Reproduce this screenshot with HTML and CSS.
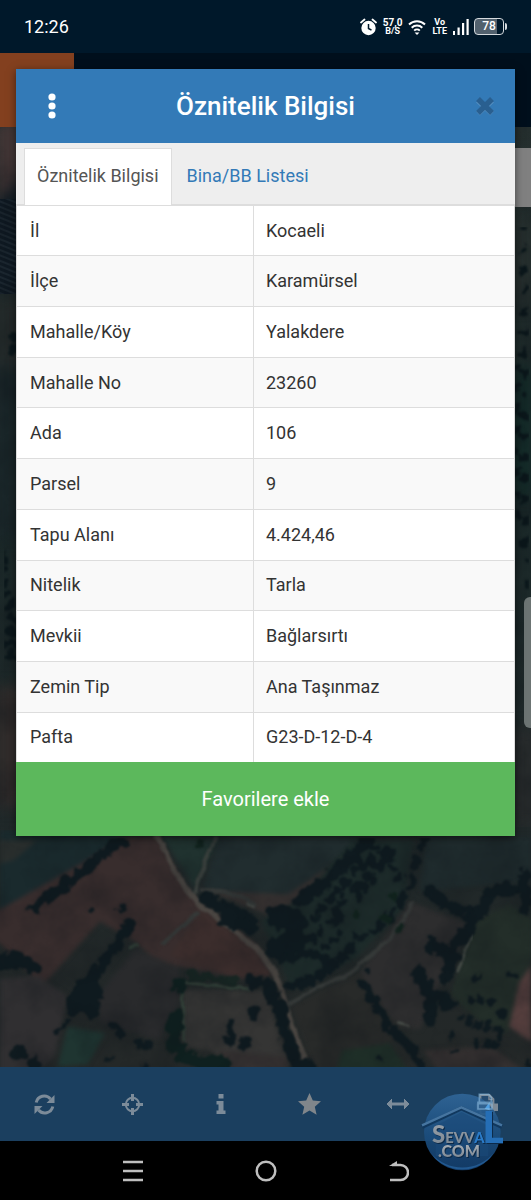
FILE: index.html
```html
<!DOCTYPE html>
<html lang="tr">
  <head>
    <meta charset="utf-8">
    <meta name="viewport" content="width=device-width, initial-scale=1">
    <title>Öznitelik Bilgisi</title>
    <link rel="stylesheet" href="styles.css">
  </head>
  <body>

    <header class="status-bar">
      <div class="clock">12:26</div>
      <div class="status-icons">
        <svg width="17" height="18" viewBox="0 0 17 18">
          <circle cx="8.500" cy="10" r="7.200" fill="#fff"/>
          <path d="M1 4.500l3.500-3M16 4.500l-3.500-3" stroke="#fff" stroke-width="1.800" stroke-linecap="round"/>
          <path d="M8.500 6v4.500l3 1.700" fill="none" stroke="#00182a" stroke-width="1.500"/>
        </svg>
        <div class="status-text"><b>57,0</b><b class="small">B/S</b></div>
        <svg width="18" height="16" viewBox="0 0 18 16" fill="none" stroke="#fff" stroke-width="2">
          <path d="M1 5.500a11.500 11.500 0 0 1 16 0M3.700 8.700a7.600 7.600 0 0 1 10.600 0M6.200 11.600a4 4 0 0 1 5.600 0"/>
          <path d="M9 16l-2.400-2.600h4.800z" fill="#fff" stroke="none"/>
        </svg>
        <div class="status-text"><b class="small">Vo</b><b class="small">LTE</b></div>
        <div class="signal-battery">
          <svg width="16" height="17" viewBox="0 0 16 17" fill="#fff">
            <path d="M0 13h2v4H0zM4.500 9.500h2.200V17H4.500zM9 5h2.200v12H9zM13.500 1h2.200v16h-2.200z"/>
          </svg>
          <div class="battery">78</div>
        </div>
      </div>
    </header>

    <main class="app">
      <div class="navbar"><div class="brand"></div></div>

      <svg class="map" viewBox="0 0 531 940" preserveAspectRatio="xMidYMin slice" aria-hidden="true">
        <defs>
          <linearGradient id="ground" x1="0" y1="0" x2="0" y2="1">
            <stop offset="0" stop-color="#26302f"/>
            <stop offset=".4" stop-color="#1b2929"/>
            <stop offset=".7" stop-color="#1f2829"/>
            <stop offset="1" stop-color="#242828"/>
          </linearGradient>
          <pattern id="furrows" width="8" height="5" patternUnits="userSpaceOnUse" patternTransform="rotate(22)">
            <rect width="8" height="5" fill="#1b262f"/>
            <rect width="8" height="3" fill="#0f1922"/>
          </pattern>
          <filter id="rough" x="0" y="0" width="1" height="1" color-interpolation-filters="sRGB">
            <feTurbulence type="fractalNoise" baseFrequency=".035" numOctaves="2" seed="4" result="n"/>
            <feDisplacementMap in="SourceGraphic" in2="n" scale="40" xChannelSelector="R" yChannelSelector="G"/>
            <feGaussianBlur stdDeviation="3.200"/>
          </filter>
          <filter id="wavy" x="0" y="0" width="1" height="1" color-interpolation-filters="sRGB">
            <feTurbulence type="fractalNoise" baseFrequency=".02" numOctaves="2" seed="2" result="n"/>
            <feDisplacementMap in="SourceGraphic" in2="n" scale="16" xChannelSelector="R" yChannelSelector="G"/>
            <feGaussianBlur stdDeviation="2.500"/>
          </filter>
          <filter id="spots" x="0" y="0" width="1" height="1" color-interpolation-filters="sRGB">
            <feTurbulence type="fractalNoise" baseFrequency=".12" numOctaves="2" seed="6" result="n"/>
            <feDisplacementMap in="SourceGraphic" in2="n" scale="14" xChannelSelector="R" yChannelSelector="G"/>
            <feGaussianBlur stdDeviation=".8"/>
          </filter>
          <filter id="soft" x="0" y="0" width="1" height="1" color-interpolation-filters="sRGB">
            <feGaussianBlur stdDeviation="7"/>
          </filter>
          <filter id="grain" x="0" y="0" width="1" height="1" color-interpolation-filters="sRGB">
            <feTurbulence type="fractalNoise" baseFrequency=".025" numOctaves="5" seed="9"/>
            <feColorMatrix values="0 0 0 0 .05  0 0 0 0 .07  0 0 0 0 .09  1 1 0 0 -.800"/>
          </filter>
        </defs>
        <rect width="531" height="940" fill="url(#ground)"/>

        <!-- strips beside the dialog -->
        <g filter="url(#soft)">
          <path d="M-5-5h30v50L-5 80z" fill="#423535"/>
          <path d="M-5 75L25 50v110H-5z" fill="#111c24"/>
          <path d="M-5 170h30v70H-5z" fill="#242a2a"/>
          <path d="M-5 240h30v170H-5z" fill="#1a2629"/>
          <path d="M-5 560h30v120H-5z" fill="#312c2b"/>
          <path d="M510 90h25v90h-25z" fill="#262f2e"/>
          <path d="M510 240h25v130h-25z" fill="#142a28"/>
          <path d="M510 600h25v100h-25z" fill="#282b2c"/>
        </g>
        <path d="M0 72h20v95H0z" fill="url(#furrows)"/>
        <g fill="none" stroke="#0b171b" stroke-linecap="round" filter="url(#spots)">
          <path d="M14 210v14M4 430v40M10 480v50M18 495v40" stroke-width="10" stroke-dasharray="0 12"/>
          <path d="M524 100v330M517 240v150M529 330v130" stroke-width="8" stroke-dasharray="0 21"/>
        </g>

        <!-- fields -->
        <g transform="translate(0 703) scale(.3387)" filter="url(#soft)">
          <path d="M0 0h370L90 240H0z" fill="#1a2a2d"/>
          <path d="M0 30h110L40 90 0 100z" fill="#292e2d"/>
          <path d="M380 20h85l95 170 200 150 45 90-90 10-200-40-70-30-60-50-90-50-170 190-60-60-120-120-45-20v-10l90-10z" fill="#382d2d"/>
          <path d="M500 370l100-130 150 120 50 70-120 0z" fill="#3b2d2c"/>
          <path d="M480 20h170L575 170z" fill="#20322f"/>
          <path d="M650 20h410L860 200 780 230 600 170z" fill="#212d2f"/>
          <path d="M850 190L1000 90l40 20-150 100-100 40-180-70z" fill="#373231"/>
          <path d="M1040 30h180L1190 230 1050 380 860 470 800 330 770 270 890 200z" fill="#1d2b2a"/>
          <path d="M1260 20h310v130l-330 30z" fill="#1f2b2d"/>
          <path d="M1210 210l180 70-80 150-70 160-60-10-130-140z" fill="#2d2d2e"/>
          <path d="M1400 270l100-50 70 40v120l-70 220-90-40-80-70z" fill="#232e29"/>
          <path d="M1568 400l-35 50-30 130 65 45z" fill="#543e3d"/>
          <path d="M860 520l200-100 110 160-20 60-150 80H930z" fill="#282a29"/>
          <path d="M540 470l250 5 30 120 40 90-180 5-60-40-80-10z" fill="#353534"/>
          <path d="M0 440l110-10 90 60-40 180-60 50H0z" fill="#302f31"/>
          <path d="M400 350l130 60v100l-60 110-170-50-20-70z" fill="#292a2c"/>
          <path d="M200 580l110 20-50 90-90 10z" fill="#1f3531"/>
          <path d="M650 650l200 20v50H640zM1250 650l200-10 110 80h-260z" fill="#343030"/>
          <path d="M1010 650l140-20 60 90H990z" fill="#1f2f28"/>
        </g>

        <!-- dirt tracks -->
        <g transform="translate(0 703) scale(.3387)" fill="none" stroke="#4a4642" stroke-width="12" filter="url(#wavy)">
          <path d="M462 15c30 60 60 110 90 165 60 70 150 120 205 170 60 60 70 120 85 160 20 60 40 120 60 170" stroke-width="16"/>
          <path d="M635 20c-10 60-50 90-60 170" stroke="#3b413e"/>
          <path d="M590 180c60 0 130 10 165 45M850 515c70-50 140-60 200-105 60-60 130-90 165-200M590 240L480 340" stroke="#353938"/>
          <path d="M540 450l200 20M538 480l5 140M380 350l30-15" stroke="#34433a" stroke-width="8"/>
          <path d="M725 215l25 13M1170 570l35 10M1395 300l-45 120" stroke="#4a504b" stroke-width="7"/>
        </g>

        <!-- hedges and trees -->
        <g transform="translate(0 703) scale(.3387)" fill="none" stroke="#0f1a1f" stroke-linecap="round" stroke-linejoin="round" filter="url(#rough)">
          <path d="M100 230l90-65 90-75 85-65" stroke-width="34" stroke-dasharray="0 17"/>
          <path d="M380 285l-50 70-60 90" stroke-width="33" stroke-dasharray="0 19"/>
          <path d="M245 455l-35 80M275 440v95M235 500l45 40" stroke-width="46" stroke-dasharray="0 26"/>
          <path d="M-5 390l60-8 55 32" stroke-width="46" stroke-dasharray="0 22"/>
          <path d="M275 235h15M350 240l25-30" stroke-width="20" stroke-dasharray="0 20"/>
          <path d="M610 200l70 40 80 45" stroke-width="44" stroke-dasharray="0 22"/>
          <path d="M665 265l100 30" stroke-width="38" stroke-dasharray="0 21"/>
          <path d="M890 205l60-40 70-70 60-60" stroke-width="42" stroke-dasharray="0 23"/>
          <path d="M820 255l50 10 10 60-65 25" stroke-width="72" stroke-dasharray="0 36"/>
          <path d="M830 380l90-20 70 40 50-60M850 460l80-20 60-40" stroke-width="36" stroke-dasharray="0 34"/>
          <path d="M930 260l60-70 60-70 90-60M990 240l90-100 90-80M920 320l90-70" stroke-width="30" stroke-dasharray="0 31 0 47 0 26"/>
          <path d="M1080 50l80 10M1060 90l70 20M1100 150l-50 60M1150 90l30 60M960 340l60-40" stroke-width="24" stroke-dasharray="0 27 0 33"/>
          <path d="M1250 30l-25 70-20 80-60 80-40 40-60 20" stroke-width="28" stroke-dasharray="0 24 0 34"/>
          <path d="M1270 180l60 45 80 30 40-70 60-10 60-10" stroke-width="40" stroke-dasharray="0 26"/>
          <path d="M1550 130v110M1410 240l-25 50-50 60-15 90" stroke-width="38" stroke-dasharray="0 25"/>
          <path d="M1280 340l60 40M1235 430l35 45v90M1300 490l30 30" stroke-width="50" stroke-dasharray="0 33"/>
          <path d="M1070 450l40 60 40 80 45 30 35 50 20 50" stroke-width="30" stroke-dasharray="0 19"/>
          <path d="M740 445h25M795 460l30 70 20 80 30 80" stroke-width="40" stroke-dasharray="0 19"/>
          <path d="M570 430l120 18" stroke="#172522" stroke-width="24" stroke-dasharray="0 20"/>
          <path d="M532 460v1M520 550l-10 60 30 60 70 20 60-10" stroke="#0f201f" stroke-width="44" stroke-dasharray="0 25"/>
          <path d="M680 575v60M745 540v1M725 635v1" stroke-width="34" stroke-dasharray="0 23"/>
          <path d="M335 580l20 20M410 630l50 15M325 675h1M430 700h1" stroke-width="30" stroke-dasharray="0 28"/>
          <path d="M50 660h5M95 690h4M885 700h20" stroke-width="42"/>
          <path d="M1410 435h1M1510 430h1M1390 500l60 10M1360 550l60 30 60 10-20 50-60-10M1330 605h1M1480 540h1M1560 690h8" stroke-width="25" stroke-dasharray="0 29"/>
          <path d="M1130 260h10M1185 290h1M1050 250h1M1160 195h1M590 40h1" stroke="#11231d" stroke-width="25"/>
          <path d="M200 565l-30 30M1090 420h1M1120 670h1M1340 650h1" stroke-width="14"/>
        </g>
        <rect width="531" height="940" filter="url(#grain)" opacity=".4"/>
      </svg>

      <div class="map-button"></div>
      <div class="map-handle"></div>

      <section class="dialog">
        <div class="dialog-header">
          <button class="dialog-menu" aria-label="Menü">
            <svg width="8" height="26" viewBox="0 0 8 26" fill="#fff">
              <circle cx="4" cy="4" r="3.600"/><circle cx="4" cy="13" r="3.600"/><circle cx="4" cy="22" r="3.600"/>
            </svg>
          </button>
          <h1>Öznitelik Bilgisi</h1>
          <button class="dialog-close" aria-label="Kapat">
            <svg width="20" height="20" viewBox="0 0 20 20" fill="none" stroke-width="5.500">
              <path d="M3 4.500l14 13M17 4.500l-14 13" stroke="#5790c1"/>
              <path d="M3 3l14 14M17 3L3 17" stroke="#295f90"/>
            </svg>
          </button>
        </div>

        <nav class="tabs">
          <a class="tab active" href="#oznitelik">Öznitelik Bilgisi</a>
          <a class="tab" href="#bina">Bina/BB Listesi</a>
        </nav>

        <table class="attributes" id="oznitelik">
          <tr><td>İl</td><td>Kocaeli</td></tr>
          <tr><td>İlçe</td><td>Karamürsel</td></tr>
          <tr><td>Mahalle/Köy</td><td>Yalakdere</td></tr>
          <tr><td>Mahalle No</td><td>23260</td></tr>
          <tr><td>Ada</td><td>106</td></tr>
          <tr><td>Parsel</td><td>9</td></tr>
          <tr><td>Tapu Alanı</td><td>4.424,46</td></tr>
          <tr><td>Nitelik</td><td>Tarla</td></tr>
          <tr><td>Mevkii</td><td>Bağlarsırtı</td></tr>
          <tr><td>Zemin Tip</td><td>Ana Taşınmaz</td></tr>
          <tr><td>Pafta</td><td>G23-D-12-D-4</td></tr>
        </table>

        <button class="favorite">Favorilere ekle</button>
      </section>
    </main>

    <footer class="bottom">
      <nav class="toolbar">
        <button aria-label="Yenile">
          <svg width="21" height="21" viewBox="0 0 21 21">
            <path d="M2.200 8.500A8.200 8.200 0 0 1 16.500 5M18.800 12.500A8.200 8.200 0 0 1 4.500 16" fill="none" stroke="#7c8b99" stroke-width="3"/>
            <path d="M20.500 1v8h-8zM.5 20v-8h8z" fill="#7c8b99"/>
          </svg>
        </button>
        <button aria-label="Konum">
          <svg width="21" height="21" viewBox="0 0 21 21" fill="none" stroke="#7c8b99">
            <circle cx="10.500" cy="10.500" r="6.700" stroke-width="2"/>
            <path d="M10.500 0v7M10.500 14v7M0 10.500h7M14 10.500h7" stroke-width="3"/>
          </svg>
        </button>
        <button aria-label="Bilgi">
          <svg width="10" height="20" viewBox="0 0 10 20" fill="#7c8b99">
            <path d="M2.500 0h5v4.500h-5zM.5 7h7v9.500h2V20H.5v-3.500h2v-6h-2z"/>
          </svg>
        </button>
        <button aria-label="Favoriler">
          <svg width="23" height="22" viewBox="0 0 23 22" fill="#80868b">
            <path d="M11.500 0l3.300 7.500 8.200.8-6.200 5.400 1.800 8.100-7.100-4.200-7.100 4.200 1.800-8.100L0 8.300l8.200-.8z"/>
          </svg>
        </button>
        <button aria-label="Ölç">
          <svg width="24" height="12" viewBox="0 0 24 12">
            <path d="M4 6h16" stroke="#7c8b99" stroke-width="3"/>
            <path d="M6 1L1 6l5 5M18 1l5 5-5 5" fill="#7c8b99" stroke="#7c8b99"/>
          </svg>
        </button>
        <button aria-label="Yazdır">
          <svg width="22" height="21" viewBox="0 0 22 21">
            <path d="M0 9.500h22V17H0z" fill="#7e8a96"/>
            <path d="M4.500 1h9l4 4v5.500h-13zM4.500 13.500h13V20h-13z" fill="#244b70" stroke="#7e8a96" stroke-width="1.800"/>
            <path d="M13 1v4.500h4.500" fill="none" stroke="#7e8a96" stroke-width="1.500"/>
          </svg>
        </button>
      </nav>

      <nav class="system-nav">
        <button aria-label="Son uygulamalar">
          <svg width="20" height="22" viewBox="0 0 20 22" stroke="#bfbfbf" stroke-width="2.500">
            <path d="M0 2h20M0 11h20M0 20h20"/>
          </svg>
        </button>
        <button aria-label="Ana ekran">
          <svg width="22" height="22" viewBox="0 0 22 22" fill="none" stroke="#bfbfbf" stroke-width="2.500">
            <circle cx="11" cy="11" r="9.300"/>
          </svg>
        </button>
        <button aria-label="Geri">
          <svg width="20" height="22" viewBox="0 0 20 22" fill="none" stroke="#bfbfbf" stroke-width="2.500">
            <path d="M1 20h10.500a7.500 7.500 0 0 0 0-15H3"/>
            <path d="M0 6L8 1v5z" fill="#bfbfbf" stroke="none"/>
          </svg>
        </button>
      </nav>

      <svg class="watermark" width="82" height="82" viewBox="61 35 246 246">
        <defs>
          <linearGradient id="ball" x1="0" y1="0" x2="0" y2="1">
            <stop offset="0" stop-color="#306597"/>
            <stop offset=".55" stop-color="#1b4d7d"/>
            <stop offset="1" stop-color="#143f6e"/>
          </linearGradient>
          <linearGradient id="steel" x1="0" y1="0" x2="0" y2="1">
            <stop offset="0" stop-color="#b4bac0"/>
            <stop offset="1" stop-color="#76828e"/>
          </linearGradient>
        </defs>
        <circle cx="185" cy="158" r="115" fill="url(#ball)" opacity=".92"/>
        <path d="M91 222a115 115 0 0 0 188 0 125 125 0 0 1-188 0z" fill="#225990"/>
        <path d="M105 140l78-42 80 42v90H105z" fill="#1a4a78" opacity=".6"/>
        <path d="M64 142l118-55 122 55" fill="none" stroke="#11385e" stroke-width="13"/>
        <path d="M64 138l118-54 122 54" fill="none" stroke="#4675a0" stroke-width="7"/>
        <path d="M252 88l15-20v25z" fill="#51a1e4"/>
        <path d="M232 69h42v20h-42zM236 45h28l8 10v18h-36z" fill="none" stroke="#8ebce0" stroke-width="5" opacity=".6"/>
        <g class="watermark-text" fill="url(#steel)">
          <text x="94" y="190"><tspan font-size="72">S</tspan><tspan font-size="44">EVV</tspan><tspan font-size="44" fill="#2b7bc8">A</tspan><tspan x="245" font-size="130" fill="#256eb6">L</tspan></text>
          <text x="112" y="232" font-size="48">.COM</text>
        </g>
      </svg>
    </footer>

  </body>
</html>
```
FILE: styles.css
```css
* {
  box-sizing: border-box;
}

html, body {
  margin: 0;
  padding: 0;
}

body {
  display: flex;
  flex-direction: column;
  min-height: 100vh;
  font: 18px/24px Roboto, sans-serif;
  color: #333;
  background: #000;
}

button {
  margin: 0;
  padding: 0;
  border: 0;
  background: none;
  font: inherit;
  color: inherit;
}

svg {
  display: block;
}

/* status bar */
.status-bar {
  display: flex;
  align-items: center;
  justify-content: space-between;
  height: 53px;
  padding: 0 25px 0 24px;
  color: #fff;
  background: #00182a;
}

.status-icons,
.signal-battery {
  display: flex;
  align-items: center;
  gap: 6px;
}

.signal-battery {
  gap: 5px;
}

.status-text {
  text-align: center;
}

.status-text b {
  display: block;
  font-size: 10px;
  line-height: 9px;
}

.status-text .small {
  font-size: 9px;
}

.battery {
  position: relative;
  width: 30px;
  height: 17px;
  margin-right: 2px;
  border: 1px solid #d5dade;
  border-radius: 4px;
  font-size: 12px;
  font-weight: 500;
  line-height: 15px;
  text-align: center;
  background: linear-gradient(90deg, #52616e 78%, #00182a 78%);
}

.battery::after {
  content: '';
  position: absolute;
  top: 4px;
  right: -4px;
  width: 2px;
  height: 7px;
  border-radius: 0 2px 2px 0;
  background: #d5dade;
}

/* map */
.app {
  position: relative;
  flex: 1;
  display: flex;
  flex-direction: column;
}

.navbar {
  height: 74px;
  background: #000f1c;
}

.brand {
  width: 74px;
  height: 74px;
  background: #83401f;
}

.map {
  flex: 1;
  width: 100%;
  min-height: 0;
}

.map-button {
  position: absolute;
  top: 95px;
  right: 0;
  width: 74px;
  height: 59px;
  background: #808080;
}

.map-handle {
  position: absolute;
  top: 544px;
  right: 0;
  width: 7px;
  height: 131px;
  border-radius: 6px 0 0 6px;
  background: #6c7473;
}

/* dialog */
.dialog {
  position: absolute;
  top: 16px;
  left: 16px;
  right: 16px;
  background: #fff;
  box-shadow: 0 2px 8px rgba(0, 0, 0, .5);
}

.dialog-header {
  display: flex;
  align-items: center;
  justify-content: space-between;
  height: 74px;
  padding: 0 20px 0 32px;
  color: #fff;
  background: #337ab7;
}

.dialog-header h1 {
  margin: 0;
  font-size: 26px;
  font-weight: 500;
  line-height: 36px;
}

.tabs {
  display: flex;
  gap: 2px;
  padding: 5px 8px 0;
  border-bottom: 2px solid #ddd;
  background: #eee;
}

.tab {
  margin-bottom: -1px;
  padding: 15px 12px 17px;
  border: 1px solid transparent;
  border-bottom: 0;
  color: #337ab7;
  text-decoration: none;
}

.tab.active {
  color: #555;
  border-color: #ddd;
  background: #fff;
}

.attributes {
  width: 100%;
  height: 556px;
  table-layout: fixed;
  border-collapse: collapse;
}

.attributes td {
  padding: 0 12px;
  border: 1px solid #ddd;
}

.attributes tr:first-child td {
  border-top: 0;
}

.attributes tr:last-child td {
  border-bottom: 0;
}

.attributes td:first-child {
  width: 237px;
  padding-left: 13px;
}

.attributes tr:nth-child(even) {
  background: #f9f9f9;
}

.favorite {
  display: block;
  width: 100%;
  height: 74px;
  font-size: 20px;
  color: #fff;
  background: #5cb85c;
}

/* bottom bars */
.bottom {
  position: relative;
}

.toolbar {
  display: flex;
  height: 74px;
  background: #1b3f5f;
}

.toolbar button,
.system-nav button {
  flex: 1;
  display: flex;
  align-items: center;
  justify-content: center;
}

.system-nav {
  display: flex;
  height: 59px;
  padding: 0 66px;
  background: #000;
}

.watermark {
  position: absolute;
  top: 24px;
  right: 28px;
  pointer-events: none;
}

.watermark-text {
  font-family: Lato, sans-serif;
  font-weight: 900;
  filter: drop-shadow(3px 3px 1px #0c2947);
}
```
